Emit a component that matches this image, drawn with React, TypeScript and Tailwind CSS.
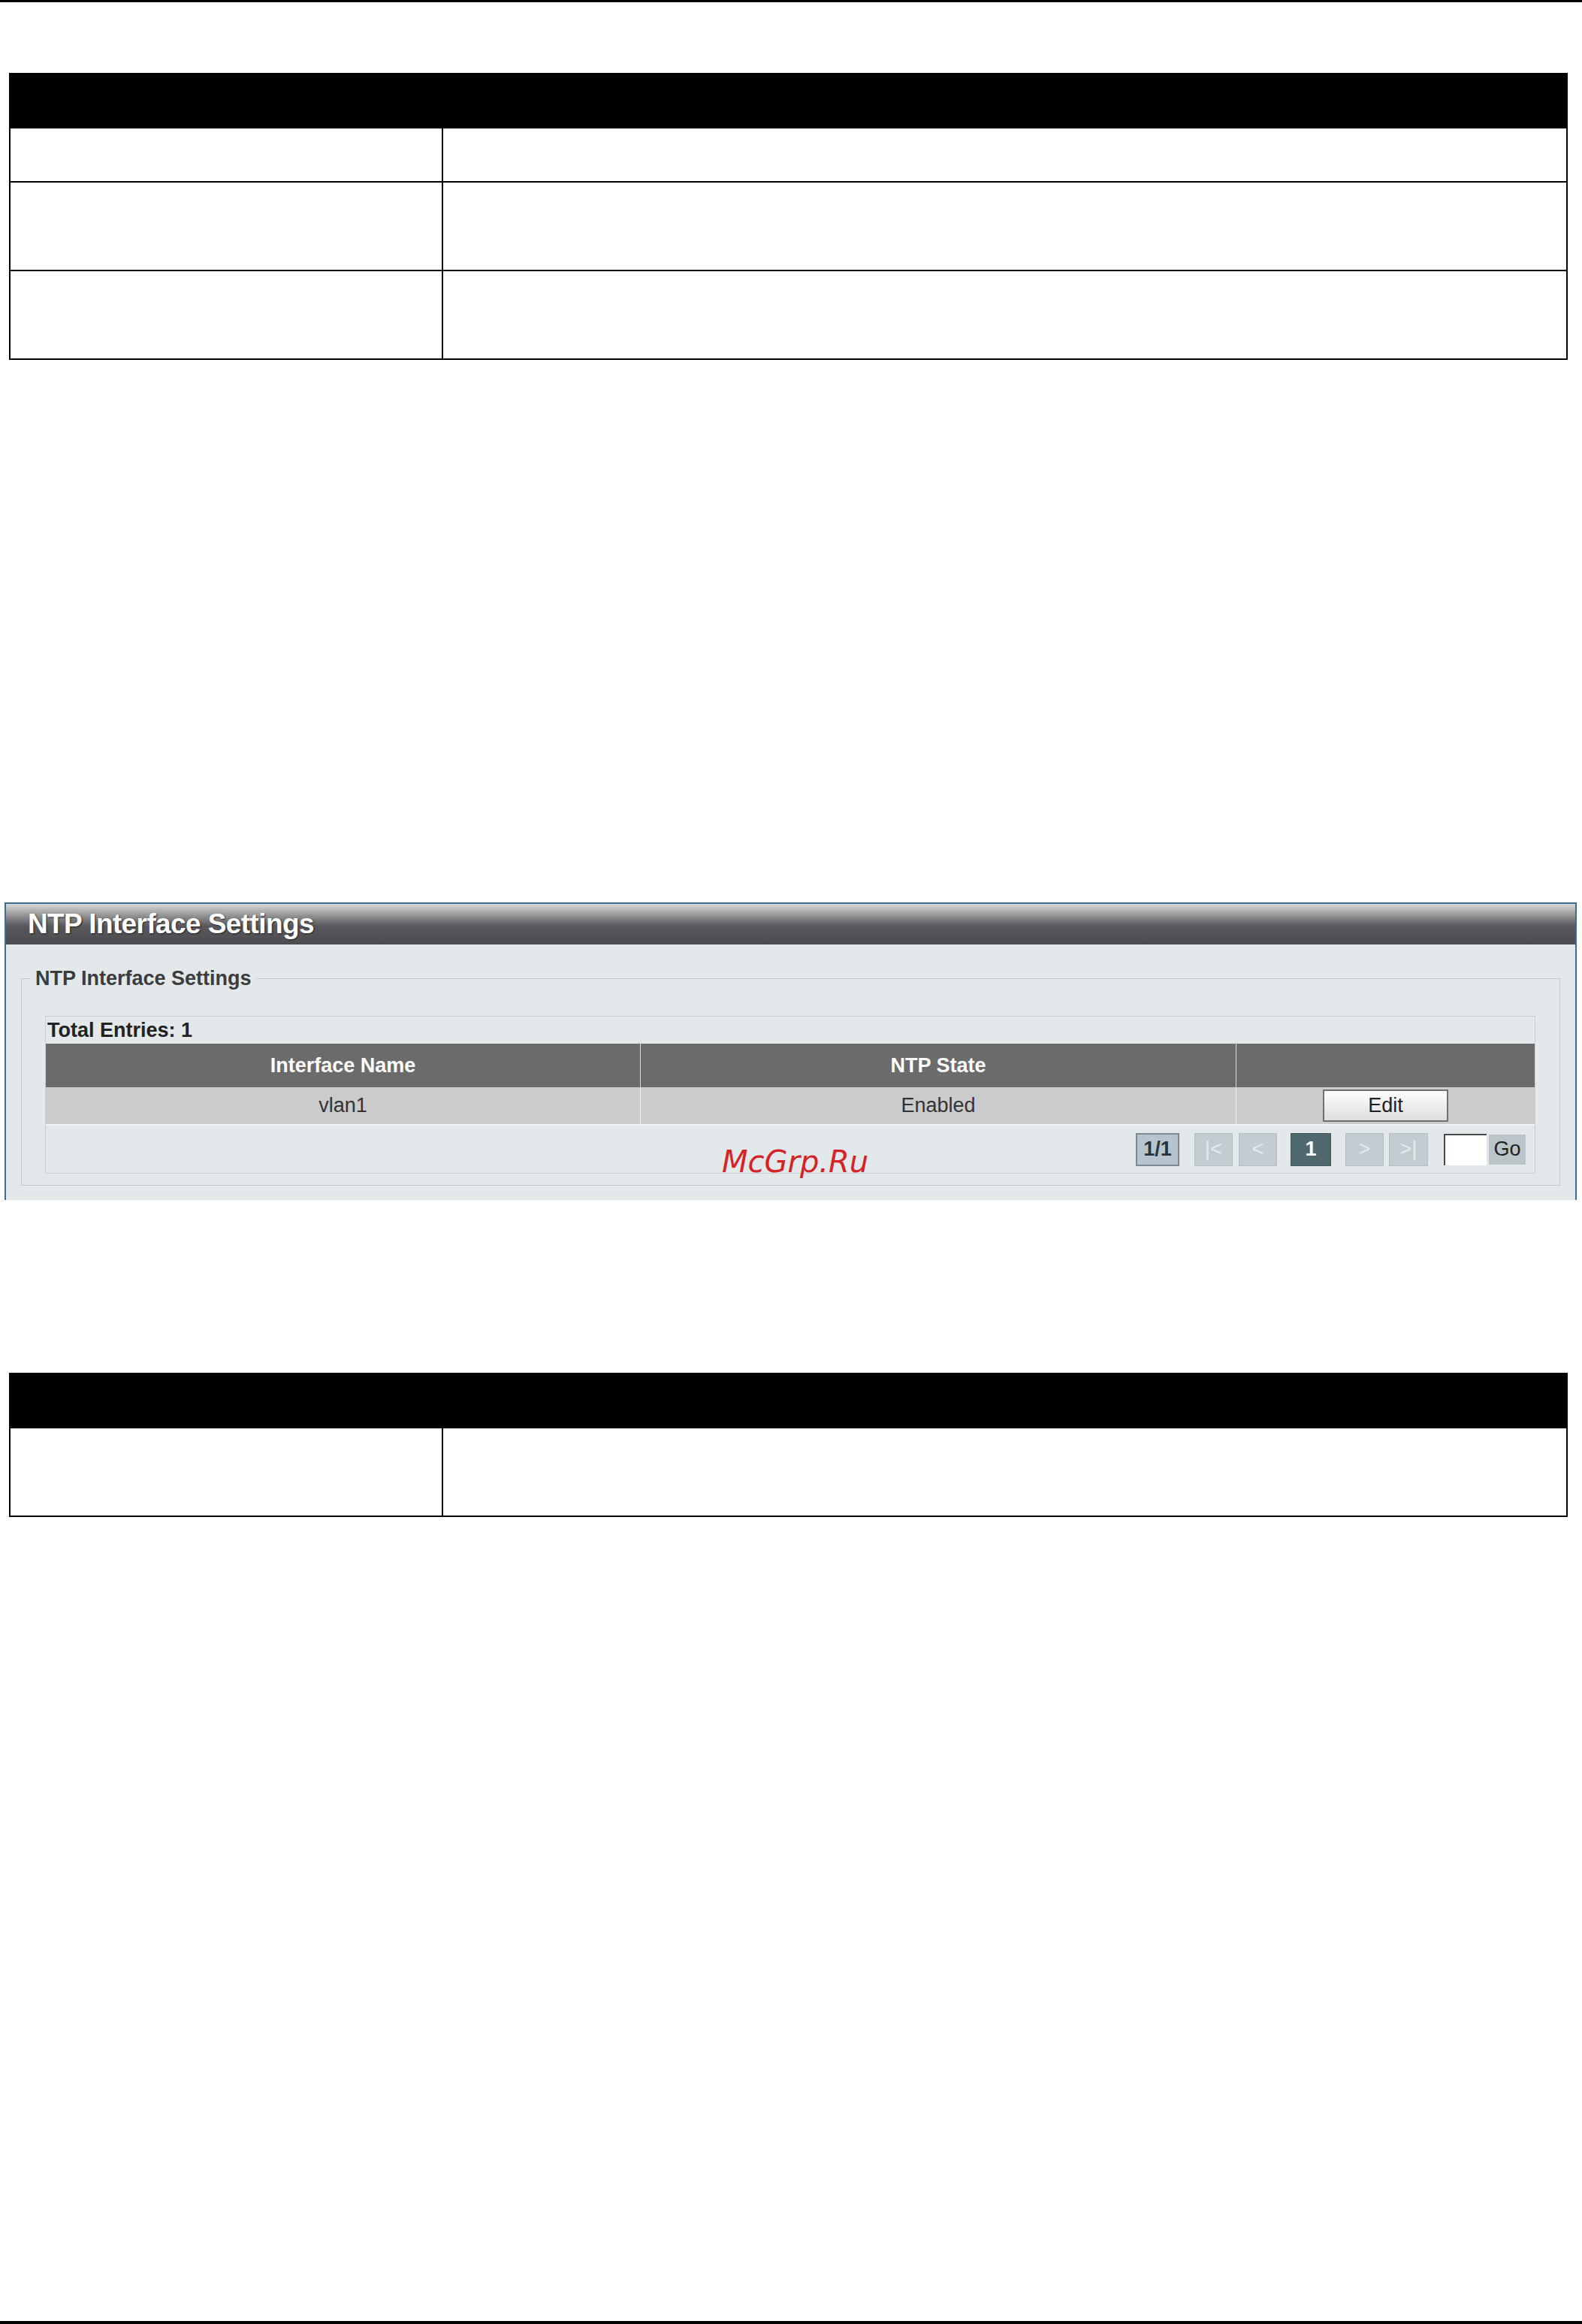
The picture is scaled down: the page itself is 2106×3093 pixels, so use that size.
import React from 'react';

// Blank manual-style tables: header band + body rows (heights include the 2px rule)
const topRows = ['h-[72px]', 'h-[118px]', 'h-[118px]'];
const bottomRows = ['h-[118px]'];

function DocTable({ rows }: { rows: string[] }) {
  return (
    <div className="ml-[12px] w-[2075px]">
      <div className="h-[74px] bg-black" />
      {rows.map((h, i) => (
        <div key={i} className={`${h} grid grid-cols-[576px_1fr] border-x-2 border-b-2 border-black`}>
          <div className="border-r-2 border-black" />
          <div />
        </div>
      ))}
    </div>
  );
}

function PageBtn({ label, className }: { label: string; className: string }) {
  return (
    <div className={`flex items-center justify-center text-[27px] leading-none ${className}`}>
      {label}
    </div>
  );
}

function NtpInterfacePanel() {
  return (
    <div className="ml-[6px] w-[2093px] h-[396px] border-x-2 border-t-2 border-[#3d6d96] bg-[#e3e8eb] font-['Liberation_Sans',Arial,sans-serif]">
      <div className="h-[54px] flex items-center pl-[29px] bg-linear-to-b from-[#dadada] via-[#58585c] via-55% to-[#4c4c51]">
        <span className="text-[37px] font-bold text-white tracking-[-0.6px] [text-shadow:1px_1px_2px_#222]">
          NTP Interface Settings
        </span>
      </div>

      <fieldset className="mt-[30px] mx-[20px] border border-[#c4c9cc] pl-[31px] pr-[32px] pb-[15px]">
        <legend className="-ml-[19px] px-[6px] text-[27px] leading-[30px] font-bold text-[#3c3c3c]">
          NTP Interface Settings
        </legend>

        <div className="mt-[35px] border border-[#c9ced1]">
          <div className="h-[36px] flex items-center pl-[2px] text-[27px] font-bold text-[#222]">
            Total Entries: 1
          </div>

          <div className="grid grid-cols-[792px_793px_1fr] h-[58px] bg-[#6b6b6b] text-[27px] font-bold text-white">
            <div className="flex items-center justify-center border-r border-[#d9d9d9]">Interface Name</div>
            <div className="flex items-center justify-center border-r border-[#d9d9d9]">NTP State</div>
            <div />
          </div>

          <div className="grid grid-cols-[792px_793px_1fr] h-[51px] bg-[#cbcbcb] text-[27px] text-[#333] border-b-2 border-[#f3f5f6]">
            <div className="flex items-center justify-center border-r border-[#eeeeee]">vlan1</div>
            <div className="flex items-center justify-center border-r border-[#eeeeee]">Enabled</div>
            <div className="flex items-center justify-center">
              <button
                type="button"
                className="w-[167px] h-[43px] border-2 border-[#707070] bg-linear-to-b from-[#fdfdfd] to-[#dedede] text-[27px] text-[#222] leading-none"
              >
                Edit
              </button>
            </div>
          </div>

          <div className="h-[63px] flex items-center justify-end pr-[12px]">
            <PageBtn label="1/1" className="w-[58px] h-[44px] bg-[#b6c5cd] border-2 border-[#7b8a92] font-bold text-[#28333d]" />
            <PageBtn label="|<" className="ml-[20px] w-[51px] h-[44px] bg-[#c2cdd2] border border-[#b3bfc5] text-[#e4eaec]" />
            <PageBtn label="<" className="ml-[8px] w-[51px] h-[44px] bg-[#c2cdd2] border border-[#b3bfc5] text-[#e4eaec]" />
            <PageBtn label="1" className="ml-[18px] w-[54px] h-[44px] bg-[#4e686e] border border-[#45595e] font-bold text-white" />
            <PageBtn label=">" className="ml-[19px] w-[51px] h-[44px] bg-[#c2cdd2] border border-[#b3bfc5] text-[#e4eaec]" />
            <PageBtn label=">|" className="ml-[7px] w-[52px] h-[44px] bg-[#c2cdd2] border border-[#b3bfc5] text-[#e4eaec]" />
            <div className="ml-[21px] w-[57px] h-[42px] bg-white border-t-2 border-l-2 border-[#4a4a4a]" />
            <PageBtn label="Go" className="ml-[3px] w-[49px] h-[40px] bg-[#b9c5c9] text-[#222]" />
          </div>
        </div>
      </fieldset>
    </div>
  );
}

export default function App() {
  return (
    <div className="relative w-[2106px] h-[3093px] bg-white flex flex-col">
      <div className="h-[3px] bg-black" />
      <div className="mt-[94px]">
        <DocTable rows={topRows} />
      </div>

      <div className="mt-[722px]">
        <NtpInterfacePanel />
      </div>

      <div className="mt-[230px]">
        <DocTable rows={bottomRows} />
      </div>

      <div className="flex-1" />
      <div className="h-[4px] bg-black" />

      <span className="absolute left-[961px] top-[1526px] text-[40px] leading-none italic text-[#d52326] font-['DejaVu_Sans',sans-serif]">
        McGrp.Ru
      </span>
    </div>
  );
}
